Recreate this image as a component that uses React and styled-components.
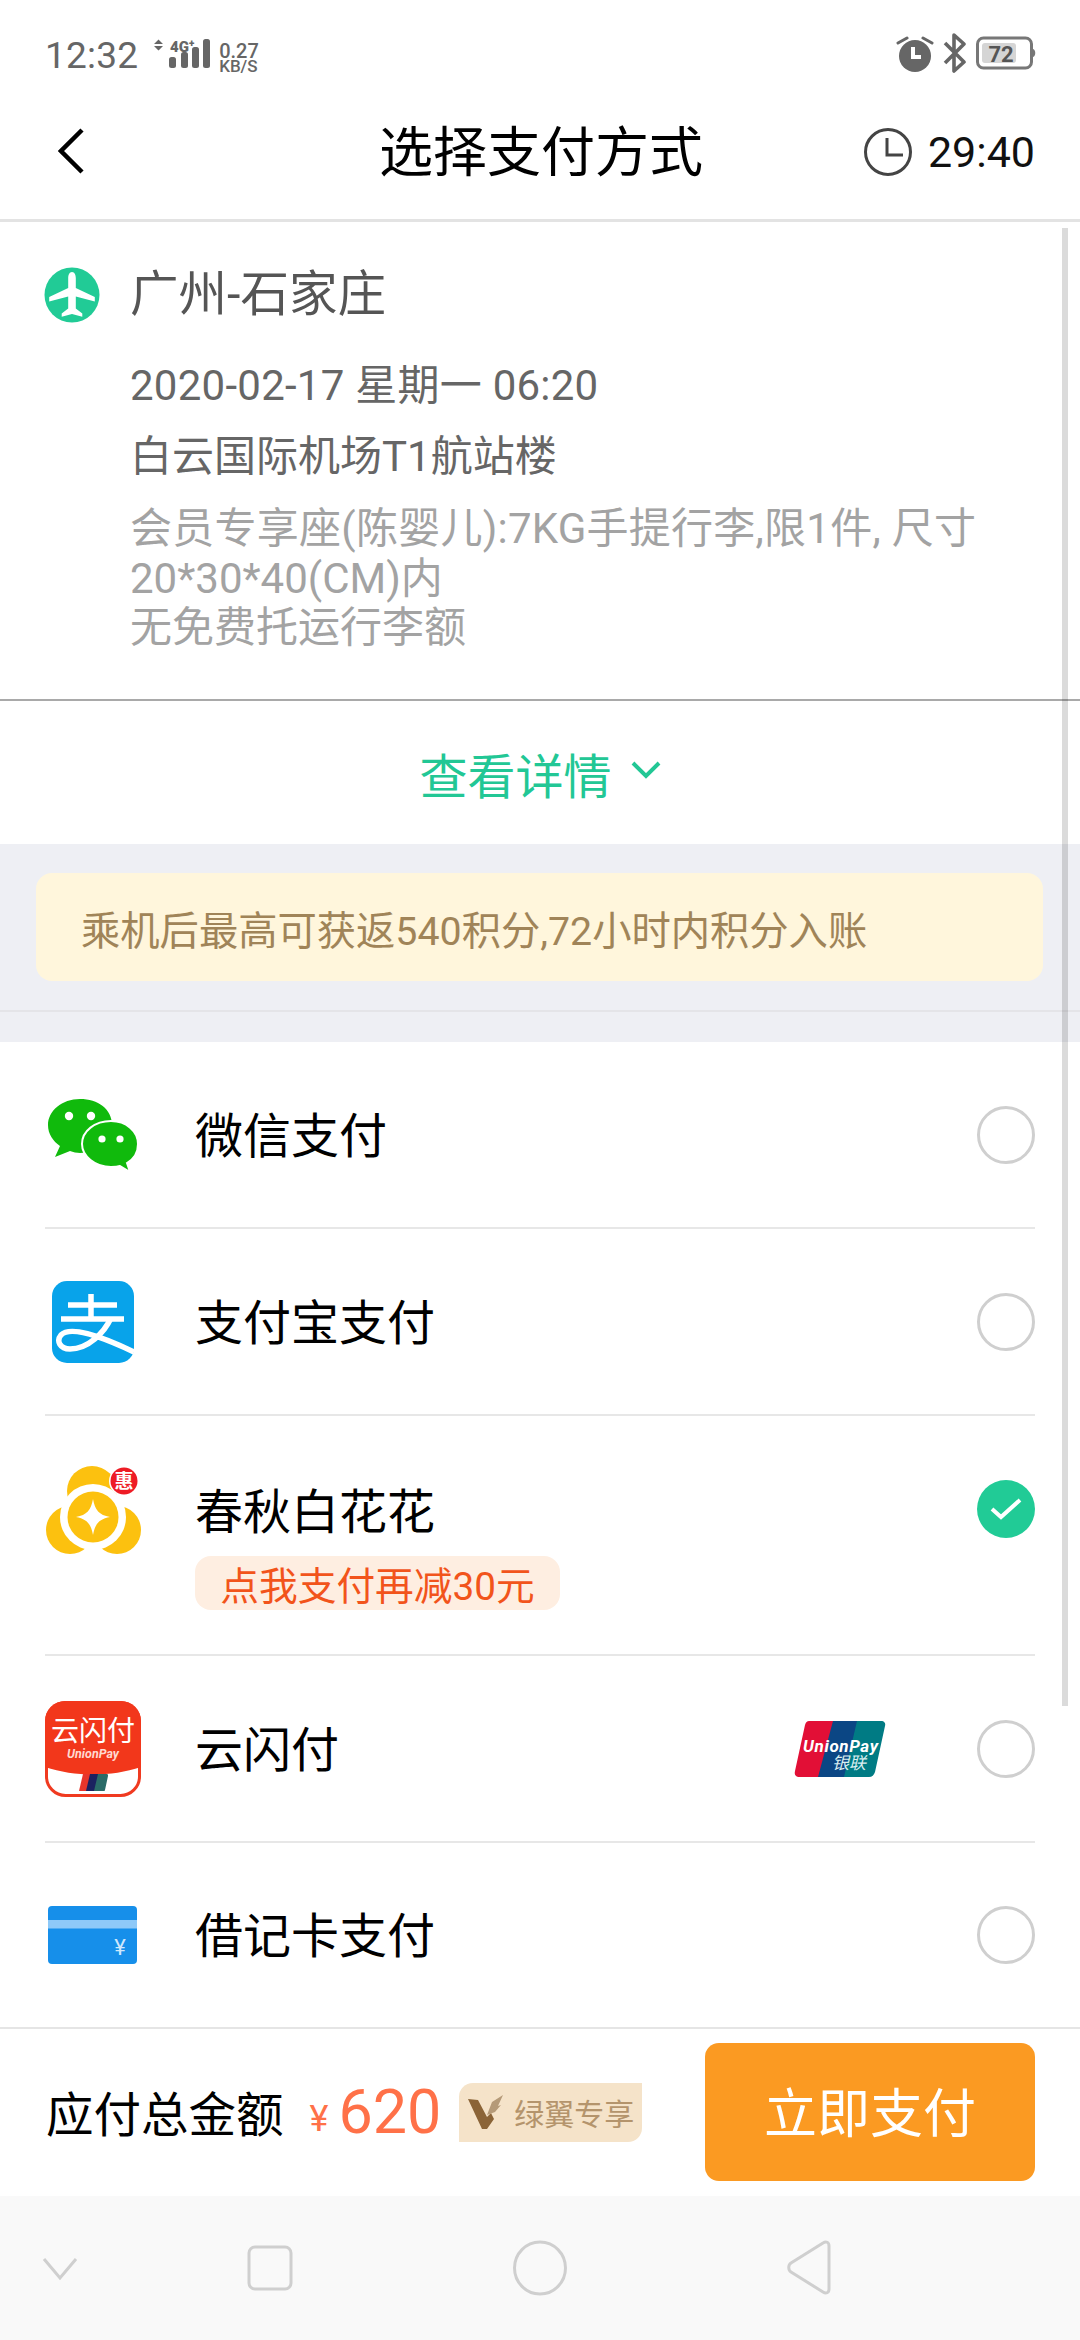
import React from "react";
import styled, { createGlobalStyle } from "styled-components";

const FONT = `Roboto, "Noto Sans CJK SC", sans-serif`;
const CJK = `"Noto Sans CJK SC", sans-serif`;

const Global = createGlobalStyle`
  html, body { margin: 0; padding: 0; background: #fff; }
  body { font-family: ${FONT}; }
  * { box-sizing: border-box; }
`;

const Page = styled.div`
  position: relative;
  width: 1080px;
  height: 2340px;
  display: flex;
  flex-direction: column;
  overflow: hidden;
  background: #fff;
`;

const StatusBar = styled.div`
  height: 74px;
  padding: 34px 44px 0 45px;
  display: flex;
  align-items: flex-start;
  justify-content: space-between;
  color: #666;
`;
const StatusGroup = styled.div`
  display: flex;
  align-items: center;
  gap: ${p => p.$gap || 0}px;
  height: 38px;
`;
const StatusTime = styled.span`
  font-size: 37px;
  line-height: 38px;
  letter-spacing: 0.2px;
  margin-top: 5px;
`;
const SignalSvg = styled.svg`
  margin-left: 12px;
  margin-top: 0;
`;
const NetSpeed = styled.span`
  display: flex;
  flex-direction: column;
  font-size: 20px;
  line-height: 17px;
  font-weight: 500;
  margin-left: 7px;
  margin-top: 9px;
`;
const NetUnit = styled.span`
  font-size: 17px;
  line-height: 13px;
`;

const Header = styled.header`
  height: 148px;
  padding: 8px 45px 0 47px;
  border-bottom: 3px solid #e3e3e3;
  display: grid;
  grid-template-columns: 1fr auto 1fr;
  align-items: center;
`;
const Title = styled.h1`
  margin: 6px 0 0;
  font-size: 54px;
  font-weight: 400;
  color: #000;
  line-height: 60px;
`;
const Timer = styled.div`
  justify-self: end;
  display: flex;
  align-items: center;
  gap: 15px;
  font-size: 43px;
  color: #111;
  margin-top: 2px;
`;
const BackBtn = styled.div`
  display: flex;
  align-items: center;
  padding-left: 11px;
`;

const Flight = styled.section`
  padding: 43px 60px 46px 44px;
  height: 477px;
`;
const FlightHead = styled.div`
  display: flex;
  align-items: center;
  gap: 30px;
  height: 60px;
  margin-bottom: 25px;
`;
const Route = styled.div`
  font-size: 48.5px;
  color: #555;
  line-height: 60px;
`;
const FlightBody = styled.div`
  padding-left: 86px;
`;
const InfoLine = styled.div`
  font-size: 42px;
  line-height: 71px;
  color: #666;
  letter-spacing: ${p => p.$track || 0}px;
`;
const Note = styled.div`
  margin-top: 12px;
  font-size: 42px;
  line-height: 49.5px;
  color: #a3a3a3;
  white-space: nowrap;
`;
const NoteLine = styled.div`
  letter-spacing: ${p => p.$track || 0}px;
`;

const Divider = styled.div`
  height: 2px;
  background: #a9a9a9;
`;

const DetailLink = styled.div`
  height: 143px;
  display: flex;
  align-items: center;
  justify-content: center;
  gap: 19px;
  font-size: 48px;
  color: #22c795;
`;
const ChevSvg = styled.svg`
  margin-top: -6px;
`;

const Band = styled.div`
  height: 198px;
  padding: 29px 0 0;
  background: #eeeff4;
`;
const Tip = styled.div`
  height: 108px;
  margin: 0 37px 0 36px;
  padding: 0 45px;
  display: flex;
  align-items: center;
  background: #fff6dc;
  border-radius: 16px;
  color: #a08458;
  font-size: 39.3px;
`;
const BandRule = styled.div`
  height: 2px;
  margin-top: 29px;
  background: #e4e4e8;
`;

const Methods = styled.div`
  flex: 1;
  padding: 0 45px;
  min-height: 0;
`;
const Method = styled.div`
  height: ${p => p.$h}px;
  display: flex;
  align-items: ${p => (p.$tall ? "flex-start" : "center")};
  border-bottom: ${p => (p.$last ? "none" : "2px solid #e7e7e7")};
`;
const IconSlot = styled.div`
  width: 150px;
  flex: none;
  display: flex;
  align-items: center;
  justify-content: flex-start;
  padding-left: ${p => p.$inset || 0}px;
  margin-top: ${p => (p.$tall ? 50 : 0)}px;
`;
const MethodText = styled.div`
  flex: 1;
  display: flex;
  flex-direction: column;
  align-items: flex-start;
  margin-top: ${p => (p.$tall ? 63 : 0)}px;
`;
const MethodName = styled.div`
  font-size: 48px;
  line-height: 60px;
  padding-top: 4px;
  color: #000;
  box-sizing: content-box;
`;
const Promo = styled.div`
  margin-top: 13px;
  height: 54px;
  width: 365px;
  display: flex;
  align-items: center;
  justify-content: center;
  background: #feeee1;
  border-radius: 16px;
  color: #f2541b;
  font-size: 38.7px;
`;
const Radio = styled.div`
  flex: none;
  width: 58px;
  height: 58px;
  border-radius: 50%;
  border: 3px solid #cfcfcf;
  background: #fff;
`;
const RadioOn = styled.div`
  flex: none;
  width: 58px;
  height: 58px;
  margin-top: 64px;
  border-radius: 50%;
  background: #21cb96;
  display: flex;
  align-items: center;
  justify-content: center;
`;
const BankMark = styled.div`
  flex: none;
  margin-right: 91px;
  display: flex;
`;

const PayBar = styled.div`
  height: 169px;
  border-top: 2px solid #e5e5e5;
  padding: 14px 45px 15px 46px;
  display: flex;
  align-items: center;
`;
const PayLabel = styled.div`
  font-size: 47.5px;
  color: #000;
  margin-right: 26px;
  margin-top: -2px;
`;
const Yen = styled.span`
  font-size: 36px;
  color: #ff7148;
  margin-right: 10px;
  margin-top: 14px;
`;
const Amount = styled.span`
  font-size: 61px;
  color: #ff7148;
  line-height: 60px;
`;
const VipTag = styled.div`
  margin-left: 18px;
  width: 183px;
  height: 59px;
  display: flex;
  align-items: center;
  gap: 10px;
  padding-left: 9px;
  background: #f5e3c9;
  border-radius: 14px 0 14px 0;
  color: #b4946c;
  font-size: 30px;
  white-space: nowrap;
`;
const PayButton = styled.button`
  margin-left: auto;
  width: 330px;
  height: 138px;
  border: none;
  border-radius: 14px;
  background: #fb9a22;
  color: #fff;
  font-family: inherit;
  font-size: 53px;
  padding: 0 0 4px;
`;

const NavBar = styled.nav`
  height: 144px;
  background: #f9f9f9;
`;
const NavIcons = styled.svg`
  display: block;
`;

const Scrollbar = styled.div`
  position: absolute;
  top: 228px;
  right: 12px;
  width: 6px;
  height: 1478px;
  background: rgba(0, 0, 0, 0.14);
`;

const WeChatIcon = () => (
  <svg width="96" height="78" viewBox="0 0 96 78">
    <path d="M35 3C17 3 3 15 3 29c0 9 5 16 12 21l-5 11 15-6c3 1 7 2 10 2 18 0 32-12 32-28S53 3 35 3z" fill="#10ba0c" />
    <circle cx="24" cy="20" r="4.2" fill="#fff" />
    <circle cx="46" cy="20" r="4.2" fill="#fff" />
    <path d="M66 25c-16 0-29 10-29 23 0 12 13 23 29 23 4 0 6 0 9-1l10 6-3-9c7-4 11-11 11-19 0-13-12-23-27-23z" fill="#10ba0c" stroke="#fff" strokeWidth="2" />
    <circle cx="57" cy="43" r="3.6" fill="#fff" />
    <circle cx="75" cy="43" r="3.6" fill="#fff" />
  </svg>
);

const AlipayIcon = () => (
  <svg width="82" height="82" viewBox="0 0 82 82">
    <rect width="82" height="82" rx="15" fill="#08a3ea" />
    <path d="M16 24h49M9 38h63M39 13v25" stroke="#fff" strokeWidth="5.5" fill="none" />
    <path d="M59 37C52 52 36 68 18 68 8 68 4 60 9 54c9-9 37 0 73 17" stroke="#fff" strokeWidth="5.5" fill="none" />
  </svg>
);

const BloomIcon = () => (
  <svg width="96" height="90" viewBox="0 0 96 90">
    <circle cx="47" cy="25" r="25" fill="#fcc10f" />
    <circle cx="25" cy="64" r="24" fill="#fcc10f" />
    <circle cx="72" cy="64" r="24" fill="#fcc10f" />
    <circle cx="48" cy="51" r="33" fill="#fff" />
    <circle cx="48" cy="51" r="25.5" fill="#fcc10f" />
    <path d="M48 33c2 11 6 16 17 18-11 2-15 7-17 18-2-11-6-16-17-18 11-2 15-7 17-18z" fill="#fff" />
    <circle cx="79" cy="15" r="15" fill="#fff" />
    <circle cx="79" cy="15" r="13.5" fill="#ee1c25" />
    <text x="79" y="22" textAnchor="middle" fontSize="19" fontWeight="700" fill="#fff" fontFamily={CJK}>惠</text>
  </svg>
);

const CloudPayIcon = () => (
  <svg width="96" height="96" viewBox="0 0 96 96">
    <rect x="1.5" y="1.5" width="93" height="93" rx="19" fill="#fff" stroke="#f03a20" strokeWidth="3" />
    <path d="M20 0h56a20 20 0 0 1 20 20v46c-30 10-66 10-96 0V20A20 20 0 0 1 20 0z" fill="#f2371b" />
    <text x="48" y="40" textAnchor="middle" fontSize="28" fill="#fff" fontFamily={CJK}>云闪付</text>
    <text x="48" y="57" textAnchor="middle" fontSize="12.5" fontWeight="700" fontStyle="italic" fill="#ffd9d0" fontFamily="Roboto, sans-serif">UnionPay</text>
    <path d="M38 73h9l-4 17h-9z" fill="#e8352b" />
    <path d="M45 73h10l-4 17h-10z" fill="#1b2160" />
    <path d="M53 73h9c1 0 1 1 1 2l-3 14c0 1-1 1-2 1h-9z" fill="#2a6b68" />
  </svg>
);

const CardIcon = () => (
  <svg width="90" height="58" viewBox="0 0 90 58">
    <rect width="89" height="58" rx="4" fill="#168fea" />
    <rect y="14" width="89" height="8.5" fill="#8ec9f8" />
    <text x="72" y="49" textAnchor="middle" fontSize="22" fill="#cfe8fd" fontFamily="Roboto, sans-serif">¥</text>
  </svg>
);

const UnionPayMark = () => (
  <svg width="92" height="58" viewBox="0 0 92 58">
    <path d="M15 1h28L30 57H6c-4 0-6-2-5-6L11 5c1-3 2-4 4-4z" fill="#e20f36" />
    <path d="M39 1h28L55 57H24z" fill="#0b4684" />
    <path d="M63 1h24c3 0 5 2 4 5L81 52c-1 3-3 5-6 5H50z" fill="#007b84" />
    <text x="9" y="32" fontSize="17" fontWeight="700" fontStyle="italic" fill="#fff" fontFamily="Roboto, sans-serif" textLength="75">UnionPay</text>
    <text x="38" y="49" fontSize="17" fontStyle="italic" fill="#d9eef0" fontFamily={CJK}>银联</text>
  </svg>
);

const Check = () => (
  <svg width="34" height="28" viewBox="0 0 34 28" fill="none">
    <path d="M3 14l9 8L31 5" stroke="#fff" strokeWidth="4" />
  </svg>
);

const PlaneBadge = () => (
  <svg width="56" height="56" viewBox="0 0 56 56">
    <circle cx="28" cy="28" r="27.5" fill="#21cb96" />
    <path d="M28 5c2.6 0 3.8 3 3.8 6v10l19 9v4.5l-19-5v12l6.5 5v3.2L28 47l-10.3 2.7v-3.2l6.5-5v-12l-19 5V30l19-9V11c0-3 1.2-6 3.8-6z" fill="#fff" />
  </svg>
);

const Signal = () => (
  <SignalSvg width="62" height="36" viewBox="0 0 62 36" fill="#666">
    <path d="M4 9l4.5-4.500L13 9zM4 11l4.500 4.500L13 11z" />
    <text x="20" y="17" fontSize="15" fontWeight="900" fontFamily="Roboto, sans-serif">4G</text>
    <text x="39" y="12" fontSize="10" fontWeight="900" fontFamily="Roboto, sans-serif">+</text>
    <rect x="19" y="22" width="7" height="11" rx="2.500" />
    <rect x="31" y="17" width="7" height="16" rx="2.500" />
    <rect x="42" y="12" width="7" height="21" rx="2.500" />
    <rect x="53" y="4" width="7" height="29" rx="2.500" />
  </SignalSvg>
);

const Alarm = () => (
  <svg width="38" height="38" viewBox="0 0 38 38" fill="none">
    <circle cx="19" cy="22" r="16" fill="#666" />
    <path d="M2 9l9-5M36 9l-9-5" stroke="#666" strokeWidth="3" strokeLinecap="round" />
    <path d="M17 13v10h8" stroke="#fff" strokeWidth="4" fill="none" />
  </svg>
);

const Bluetooth = () => (
  <svg width="24" height="40" viewBox="0 0 24 40" fill="none">
    <path d="M2 10l19 19-10 9V2l10 9L2 30" stroke="#666" strokeWidth="3.6" strokeLinejoin="round" />
  </svg>
);

const Battery = () => (
  <svg width="60" height="34" viewBox="0 0 60 34" fill="none">
    <rect x="1.5" y="2" width="54" height="30" rx="6" stroke="#777" strokeWidth="3" />
    <rect x="6" y="7" width="34" height="20" rx="3" fill="#d5d5d5" />
    <path d="M57 13c3 1 3 7 0 8z" fill="#777" />
    <text x="25" y="26" textAnchor="middle" fontSize="22" fontWeight="700" fill="#555" fontFamily="Roboto, sans-serif">72</text>
  </svg>
);

const Clock = () => (
  <svg width="50" height="50" viewBox="0 0 50 50" fill="none" stroke="#444" strokeWidth="3">
    <circle cx="25" cy="25" r="22.5" />
    <path d="M24 11v17h16" />
  </svg>
);

const Back = () => (
  <svg width="26" height="46" viewBox="0 0 26 46" fill="none">
    <path d="M24 2L3 23l21 21" stroke="#000" strokeWidth="4.5" />
  </svg>
);

const Chev = () => (
  <ChevSvg width="30" height="18" viewBox="0 0 30 18" fill="none">
    <path d="M2 2l13 13L28 2" stroke="#22c795" strokeWidth="4" />
  </ChevSvg>
);

const Wing = () => (
  <svg width="36" height="34" viewBox="0 0 36 34">
    <path d="M0 4l10 1 9 17 4-4 3 6-7 10h-5z" fill="#8b6437" />
    <path d="M19 20l5-13 11-7-5 11 3-1-6 7z" fill="#b59a78" />
  </svg>
);

const methods = [
  { name: "微信支付", icon: <WeChatIcon />, h: 187 },
  { name: "支付宝支付", icon: <AlipayIcon />, h: 187, inset: 7 },
  { name: "春秋白花花", icon: <BloomIcon />, h: 240, promo: "点我支付再减30元", on: true },
  { name: "云闪付", icon: <CloudPayIcon />, h: 187, bank: true },
  { name: "借记卡支付", icon: <CardIcon />, h: 184, inset: 3, last: true },
];

export default function App() {
  return (
    <Page>
      <Global />
      <StatusBar>
        <StatusGroup>
          <StatusTime>12:32</StatusTime>
          <Signal />
          <NetSpeed>0.27<NetUnit>KB/S</NetUnit></NetSpeed>
        </StatusGroup>
        <StatusGroup $gap={9}>
          <Alarm />
          <Bluetooth />
          <Battery />
        </StatusGroup>
      </StatusBar>
      <Header>
        <BackBtn><Back /></BackBtn>
        <Title>选择支付方式</Title>
        <Timer><Clock />29:40</Timer>
      </Header>
      <Flight>
        <FlightHead>
          <PlaneBadge />
          <Route>广州-石家庄</Route>
        </FlightHead>
        <FlightBody>
          <InfoLine $track={0.25}>2020-02-17 星期一 06:20</InfoLine>
          <InfoLine>白云国际机场T1航站楼</InfoLine>
          <Note>
            <NoteLine $track={0.25}>会员专享座(陈婴儿):7KG手提行李,限1件, 尺寸</NoteLine>
            <NoteLine>20*30*40(CM)内</NoteLine>
            <NoteLine>无免费托运行李额</NoteLine>
          </Note>
        </FlightBody>
      </Flight>
      <Divider />
      <DetailLink>查看详情<Chev /></DetailLink>
      <Band>
        <Tip>乘机后最高可获返540积分,72小时内积分入账</Tip>
        <BandRule />
      </Band>
      <Methods>
        {methods.map(m => (
          <Method key={m.name} $h={m.h} $last={m.last} $tall={m.on}>
            <IconSlot $inset={m.inset} $tall={m.on}>{m.icon}</IconSlot>
            <MethodText $tall={m.on}>
              <MethodName>{m.name}</MethodName>
              {m.promo && <Promo>{m.promo}</Promo>}
            </MethodText>
            {m.bank && <BankMark><UnionPayMark /></BankMark>}
            {m.on ? <RadioOn><Check /></RadioOn> : <Radio />}
          </Method>
        ))}
      </Methods>
      <PayBar>
        <PayLabel>应付总金额</PayLabel>
        <Yen>¥</Yen>
        <Amount>620</Amount>
        <VipTag><Wing />绿翼专享</VipTag>
        <PayButton>立即支付</PayButton>
      </PayBar>
      <NavBar>
        <NavIcons width="1080" height="144" viewBox="0 0 1080 144" fill="none" stroke="#cfcfcf" strokeWidth="3">
          <path d="M44 63l16 19 16-19" />
          <rect x="249" y="51" width="42" height="42" rx="6" />
          <ellipse cx="540" cy="72" rx="25.5" ry="26" />
          <path d="M829 50c0-4-3-5-6-3l-32 20c-3 2-3 7 0 9l32 20c3 2 6 1 6-3z" />
        </NavIcons>
      </NavBar>
      <Scrollbar />
    </Page>
  );
}
